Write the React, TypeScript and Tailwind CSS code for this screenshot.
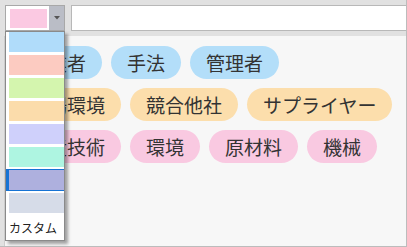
const swatches = [
  '#b0dcfa',
  '#fccbc1',
  '#d4f5ae',
  '#fbdcab',
  '#cfd0fb',
  '#aef5e1',
  '#aeb0de',
  '#d6dce8',
];
const selected = 6;

const rows = [
  { color: 'bg-[#b3def9]', tags: ['作業者', '手法', '管理者'] },
  { color: 'bg-[#fcdeac]', tags: ['市場環境', '競合他社', 'サプライヤー'] },
  { color: 'bg-[#f9c9e1]', tags: ['生産技術', '環境', '原材料', '機械'] },
];

function Swatch({ color, active }: { color: string; active: boolean }) {
  if (active) {
    return (
      <div className="-my-px h-[22px] border-y border-l-[3px] border-[#1673d4]">
        <div className="h-[20px]" style={{ background: color }} />
      </div>
    );
  }
  return (
    <div className="h-[20px] pl-[3px]">
      <div className="h-full" style={{ background: color }} />
    </div>
  );
}

export default function App() {
  return (
    <div
      className="relative flex h-[247px] w-[407px] flex-col border-r border-b border-[#bcbcbc] bg-[#e1e1e1] text-[#333]"
      style={{ fontFamily: '"Noto Sans CJK JP", "Noto Sans", sans-serif' }}
    >
      <div className="flex h-[36px] shrink-0 items-start gap-[6px] pt-[5px] pl-[5px]">
        <button className="flex h-[26px] w-[60px] items-center border border-[#a8a8a8] bg-white pl-[4px]">
          <span className="h-[19px] w-[37px] bg-[#fbc9e2]" />
          <span className="ml-[2px] flex h-full w-[15px] items-center justify-center bg-[#babdc6]">
            <svg width="6" height="4" viewBox="0 0 6 4">
              <path d="M0 0h6L3 3.5z" fill="#555" />
            </svg>
          </span>
        </button>
        <input className="h-[26px] flex-1 border border-r-0 border-[#b8b8b8] bg-white outline-none" />
      </div>

      <div className="ml-[4px] flex flex-1 flex-col gap-[9px] border-l border-[#cdcdcd] bg-[#f7f7f7] pt-[10px] pl-[8px]">
        {rows.map((row, i) => (
          <div key={i} className="flex gap-[9px]">
            {row.tags.map((t) => (
              <span
                key={t}
                className={`flex h-[33px] items-center rounded-full px-[16px] text-[19px] leading-none ${row.color}`}
              >
                {t}
              </span>
            ))}
          </div>
        ))}
      </div>

      <div className="absolute top-[31px] left-[5px] flex h-[210px] w-[60px] flex-col border border-[#8a8a8a] bg-white shadow-[3px_3px_3px_rgba(0,0,0,0.35)]">
        <div className="flex flex-col gap-[3px]">
          {swatches.map((c, i) => (
            <Swatch key={i} color={c} active={i === selected} />
          ))}
        </div>
        <div className="flex flex-1 items-center pt-[2px] pl-[3px] text-[12px] text-[#222]">カスタム</div>
      </div>
    </div>
  );
}
